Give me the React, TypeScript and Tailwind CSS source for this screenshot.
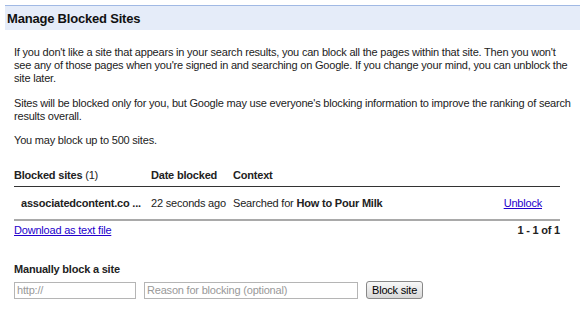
import React from 'react';

const rows = [
  { site: 'associatedcontent.co ...', date: '22 seconds ago', query: 'How to Pour Milk' },
];

export default function App() {
  return (
    <div className="w-[580px] h-[314px] bg-white text-[#222] text-[11px] tracking-[-0.2px] leading-[13px] font-['Liberation_Sans',Arial,sans-serif] overflow-hidden whitespace-nowrap">
      <div className="mt-[5px] ml-[5px] h-[25px] bg-[#e5ecf9] border-t border-[#a1b9e4] flex items-center pl-[2px]">
        <h2 className="text-[13px] font-bold text-[#111]">Manage Blocked Sites</h2>
      </div>

      <div className="px-[14px] pt-[16px]">
        <p>
          If you don't like a site that appears in your search results, you can block all the pages within that site. Then you won't
          <br />
          see any of those pages when you're signed in and searching on Google. If you change your mind, you can unblock the
          <br />
          site later.
        </p>
        <p className="mt-[12px]">
          Sites will be blocked only for you, but Google may use everyone's blocking information to improve the ranking of search
          <br />
          results overall.
        </p>
        <p className="mt-[11px]">You may block up to 500 sites.</p>

        <table className="mt-[20px] w-[546px] border-collapse">
          <thead>
            <tr className="border-b border-[#333] font-bold text-left">
              <th className="h-[19px] pb-[1px] w-[137px] text-left">Blocked sites <span className="font-normal">(1)</span></th>
              <th className="pb-[1px] w-[82px] text-left">Date blocked</th>
              <th className="pb-[1px] text-left">Context</th>
              <th className="pb-[1px]"></th>
            </tr>
          </thead>
          <tbody>
            {rows.map((r) => (
              <tr key={r.site} className="border-b-2 border-[#a9a9a9]">
                <td className="h-[34px] pl-[7px] pt-[1px] font-bold">{r.site}</td>
                <td className="pt-[1px]">{r.date}</td>
                <td className="pt-[1px]">
                  Searched for <span className="font-bold">{r.query}</span>
                </td>
                <td className="pt-[1px] text-right pr-[18px]">
                  <a href="#" className="text-[#2200cc] underline">Unblock</a>
                </td>
              </tr>
            ))}
          </tbody>
        </table>

        <div className="w-[546px] flex justify-between items-center mt-[3px]">
          <a href="#" className="text-[#2200cc] underline">Download as text file</a>
          <span className="font-bold">1 - 1 of 1</span>
        </div>

        <div className="mt-[26px] font-bold">Manually block a site</div>
        <div className="mt-[5px] flex items-center gap-[8px]">
          <input
            className="w-[122px] h-[17px] border border-[#b5b5b5] px-[2px] text-[11px] placeholder:text-[#999] outline-none"
            placeholder="http://"
          />
          <input
            className="w-[214px] h-[17px] border border-[#b5b5b5] px-[2px] text-[11px] placeholder:text-[#999] outline-none"
            placeholder="Reason for blocking (optional)"
          />
          <button className="h-[18px] px-[5px] border border-[#888] rounded-[3px] bg-gradient-to-b from-[#f8f8f8] to-[#d8d8d8] text-[11px] text-black">
            Block site
          </button>
        </div>
      </div>
    </div>
  );
}
